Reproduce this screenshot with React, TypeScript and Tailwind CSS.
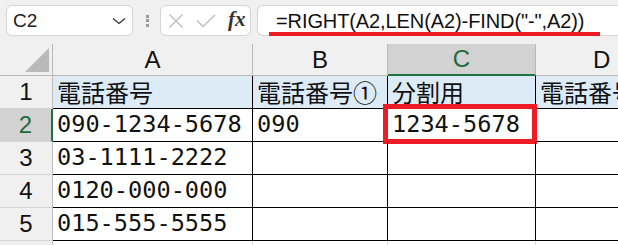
import React from "react";

const mono = "font-['DejaVu_Sans_Mono','Noto_Sans_CJK_JP',monospace]";
const jp = "font-['Noto_Sans_CJK_JP',sans-serif]";
const sans = "font-['Liberation_Sans','Noto_Sans_CJK_JP',sans-serif]";

function Cell({
  children,
  className = "",
  jpText = false,
}: {
  children?: React.ReactNode;
  className?: string;
  jpText?: boolean;
}) {
  return (
    <div
      className={`relative flex items-center pl-[4px] whitespace-nowrap overflow-visible border-r border-b border-black text-[#111] ${
        jpText ? `${jp} text-[24px]` : `${mono} text-[23.6px]`
      } ${className}`}
    >
      {children}
    </div>
  );
}

function RowHead({ n, active = false }: { n: string; active?: boolean }) {
  return (
    <div
      className={`flex items-center justify-center ${sans} text-[24px] border-b border-[#d4d4d4] ${
        active
          ? "bg-[#d2d2d2] text-[#1d6b3f] border-r-2 border-r-[#217346]"
          : "bg-[#f0f0f0] text-[#111] border-r border-r-[#bcbcbc]"
      }`}
    >
      {n}
    </div>
  );
}

export default function App() {
  return (
    <div className="w-[618px] h-[245px] overflow-hidden bg-[#f0f0f0] flex flex-col">
      {/* toolbar */}
      <div className="h-[44px] flex items-start pt-[5px] pl-[6px] gap-0 shrink-0">
        <div className="w-[127px] h-[31px] bg-white border border-[#d5d5d5] rounded-[6px] flex items-center justify-between pl-[6px] pr-[6px]">
          <span className={`${sans} text-[19px] text-[#222] leading-none`}>C2</span>
          <svg width="14" height="8" viewBox="0 0 14 8" className="mr-[0px]">
            <path d="M1 1.5 L7 6.5 L13 1.5" fill="none" stroke="#333" strokeWidth="1.3" />
          </svg>
        </div>
        <div className="w-[27px] h-[31px] flex flex-col items-center justify-center gap-[1.5px] pl-[1px]">
          <div className="w-[3px] h-[3px] bg-[#9b9b9b]" />
          <div className="w-[3px] h-[3px] bg-[#9b9b9b]" />
          <div className="w-[3px] h-[3px] bg-[#9b9b9b]" />
        </div>
        <div className="w-[91px] h-[31px] bg-white border border-[#d5d5d5] rounded-[6px] flex items-center pl-[6px]">
          <svg width="16" height="16" viewBox="0 0 16 16" className="ml-[1px]">
            <path d="M1.5 1.5 L14.5 14.5 M14.5 1.5 L1.5 14.5" stroke="#bdbdbd" strokeWidth="1.4" fill="none" />
          </svg>
          <svg width="20" height="14" viewBox="0 0 20 14" className="ml-[12px]">
            <path d="M1 6.5 L7 12.5 L19 1" stroke="#bdbdbd" strokeWidth="1.4" fill="none" />
          </svg>
          <span className="ml-[12px] font-['Liberation_Serif',serif] italic font-bold text-[21px] leading-none text-[#333] -mt-[2px]">
            fx
          </span>
        </div>
        <div className="ml-[6px] relative flex-1 h-[31px] bg-white border border-[#d5d5d5] rounded-l-[6px] border-r-0 flex items-center pl-[18px]">
          <span className={`${sans} text-[20px] text-[#111] leading-none tracking-[-0.1px]`}>
            =RIGHT(A2,LEN(A2)-FIND("-",A2))
          </span>
          <div className="absolute left-[11px] top-[26px] w-[331px] h-[4px] bg-[#ee1c25]" />
        </div>
      </div>

      {/* grid */}
      <div className="grid grid-cols-[53px_200px_135px_148px_1fr] grid-rows-[32px_33px_33px_33px_33px_33px_33px] bg-white">
        {/* column headers */}
        <div className="bg-[#f0f0f0] border-r border-b border-[#b8b8b8] flex items-end justify-end pr-[3px] pb-[3px]">
          <svg width="24" height="24" viewBox="0 0 24 24">
            <path d="M24 0 L24 24 L0 24 Z" fill="#b9b9b9" />
          </svg>
        </div>
        <div className={`bg-[#f0f0f0] border-r border-b border-[#b8b8b8] flex items-center justify-center ${sans} text-[24px] text-[#111]`}>A</div>
        <div className={`bg-[#f0f0f0] border-r border-b border-[#b8b8b8] flex items-center justify-center ${sans} text-[24px] text-[#111]`}>B</div>
        <div className={`bg-[#d2d2d2] border-r border-[#b8b8b8] border-b-2 border-b-[#217346] flex items-center justify-center ${sans} text-[24px] text-[#1d6b3f]`}>C</div>
        <div className={`bg-[#f0f0f0] border-b border-[#b8b8b8] flex items-center justify-start pl-[57px] ${sans} text-[24px] text-[#111]`}>D</div>

        {/* row 1 */}
        <RowHead n="1" />
        <Cell jpText className="bg-[#ddebf7]">電話番号</Cell>
        <Cell jpText className="bg-[#ddebf7]">電話番号①</Cell>
        <Cell jpText className="bg-[#ddebf7]">分割用</Cell>
        <Cell jpText className="bg-[#ddebf7] border-r-0">電話番号</Cell>

        {/* row 2 */}
        <RowHead n="2" active />
        <Cell>090-1234-5678</Cell>
        <Cell>090</Cell>
        <Cell>
          1234-5678
          <div className="absolute left-[-5px] top-[-5px] w-[154px] h-[40px] border-[5px] border-[#ee1c25]" />
        </Cell>
        <Cell className="border-r-0" />

        {/* row 3 */}
        <RowHead n="3" />
        <Cell>03-1111-2222</Cell>
        <Cell />
        <Cell />
        <Cell className="border-r-0" />

        {/* row 4 */}
        <RowHead n="4" />
        <Cell>0120-000-000</Cell>
        <Cell />
        <Cell />
        <Cell className="border-r-0" />

        {/* row 5 */}
        <RowHead n="5" />
        <Cell>015-555-5555</Cell>
        <Cell />
        <Cell />
        <Cell className="border-r-0" />

        {/* row 6 */}
        <div className="bg-[#f0f0f0] border-r border-[#bcbcbc]" />
        <div className="border-r border-[#d9d9d9]" />
        <div className="border-r border-[#d9d9d9]" />
        <div className="border-r border-[#d9d9d9]" />
        <div />
      </div>
    </div>
  );
}
